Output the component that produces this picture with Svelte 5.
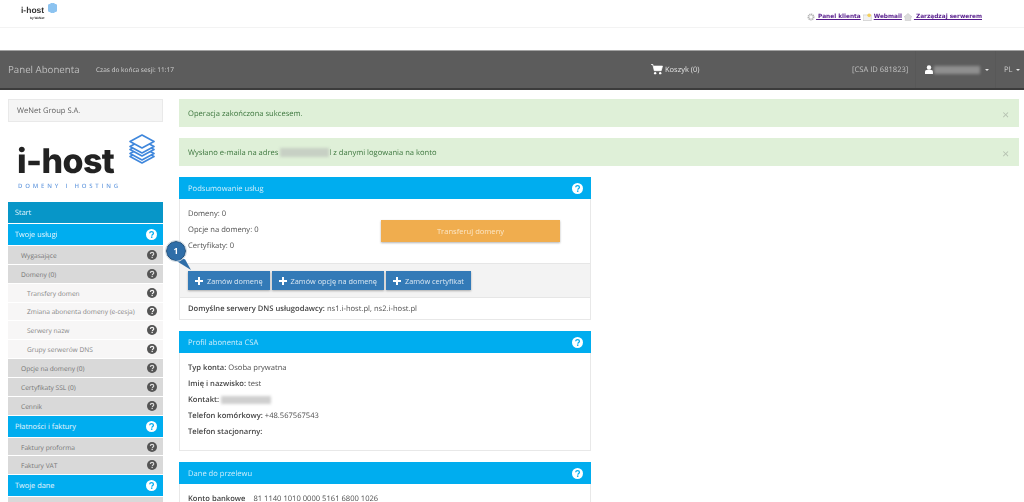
<script>
	const menu = [
		{ label: 'Start', kind: 'start' },
		{ label: 'Twoje usługi', kind: 'head' },
		{ label: 'Wygasające', kind: 'sub' },
		{ label: 'Domeny (0)', kind: 'sub' },
		{ label: 'Transfery domen', kind: 'leaf' },
		{ label: 'Zmiana abonenta domeny (e-cesja)', kind: 'leaf' },
		{ label: 'Serwery nazw', kind: 'leaf' },
		{ label: 'Grupy serwerów DNS', kind: 'leaf' },
		{ label: 'Opcje na domeny (0)', kind: 'sub' },
		{ label: 'Certyfikaty SSL (0)', kind: 'sub' },
		{ label: 'Cennik', kind: 'sub' },
		{ label: 'Płatności i faktury', kind: 'head' },
		{ label: 'Faktury proforma', kind: 'sub' },
		{ label: 'Faktury VAT', kind: 'sub' },
		{ label: 'Twoje dane', kind: 'head' },
		{ label: '', kind: 'sub' }
	];
	const orders = ['Zamów domenę', 'Zamów opcję na domenę', 'Zamów certyfikat'];
</script>

{#snippet help(size)}
	<svg class="help" width={size} height={size} viewBox="0 0 24 24" aria-hidden="true">
		<circle cx="12" cy="12" r="12" fill="currentColor" />
		<path d="M8 9.4c.2-2.4 1.900-3.600 4.100-3.600 2.300 0 4.100 1.300 4.100 3.400 0 3-3.300 2.900-3.300 5.300" fill="none" stroke="var(--hole)" stroke-width="2.800" />
		<rect x="10.800" y="16.200" width="3.200" height="3.200" fill="var(--hole)" />
	</svg>
{/snippet}

<div class="page">
	<header class="topbar">
		<div class="mini-logo">
			<span class="mini-name">i-host</span>
			<span class="mini-by">by WeNet</span>
			<svg class="mini-mark" width="9" height="10" viewBox="0 0 9 10" aria-hidden="true">
				<path d="M4.500 0 9 2.200v5.600L4.500 10 0 7.800V2.200z" fill="#8cc3f0" stroke="#8cc3f0" stroke-linejoin="round" />
			</svg>
		</div>
		<nav class="toplinks">
			<svg width="8" height="8" viewBox="0 0 10 10" aria-hidden="true"><circle cx="5" cy="5" r="3.200" fill="none" stroke="#b5b5b5" stroke-width="2.400" stroke-dasharray="1.500 .6" /></svg>
			<a href="#panel">&nbsp;Panel klienta</a>
			<svg class="mail" width="9" height="8" viewBox="0 0 11 9" aria-hidden="true"><rect y="2" width="10" height="7" fill="#f1f1f1" stroke="#c9c9c9" stroke-width=".8" /><circle cx="7.500" cy="2.500" r="2.200" fill="#f4cf5a" /></svg>
			<a href="#mail">Webmail</a>
			<svg width="8" height="8" viewBox="0 0 10 10" aria-hidden="true"><path d="M5 .5 10 5H8.500v4.500h-7V5H0z" fill="#dcdcdc" stroke="#bdbdbd" stroke-width=".6" /></svg>
			<a href="#server">&nbsp;Zarządzaj serwerem</a>
		</nav>
	</header>

	<div class="navbar">
		<div class="brand">Panel Abonenta</div>
		<div class="session">Czas do końca sesji: 11:17</div>
		<div class="cart">
			<svg width="12" height="11" viewBox="0 0 13 12" aria-hidden="true">
				<path d="M0 .5h2l1.500 6.800h7.600l1.400-5H3.200" fill="#fff" stroke="#fff" stroke-width=".8" />
				<circle cx="4.500" cy="10" r="1.300" fill="#fff" />
				<circle cx="10" cy="10" r="1.300" fill="#fff" />
			</svg>
			<span>Koszyk (0)</span>
		</div>
		<div class="csa">[CSA ID 681823]</div>
		<div class="user">
			<svg width="8" height="9" viewBox="0 0 9 10" aria-hidden="true">
				<circle cx="4.500" cy="2.700" r="2.500" fill="#fff" />
				<path d="M0 10V7.500C0 6 1.500 5.400 3 5.300h3c1.500.1 3 .7 3 2.200V10z" fill="#fff" />
			</svg>
			<span class="user-name"></span>
			<span class="caret"></span>
		</div>
		<div class="lang">PL <span class="caret"></span></div>
	</div>

	<div class="layout">
		<aside class="sidebar">
			<div class="company">WeNet Group S.A.</div>
			<div class="logo">
				<div class="logo-row">
					<span class="logo-name">i-host</span>
					<svg class="logo-mark" width="26" height="30" viewBox="0 0 26 30" aria-hidden="true">
						<g fill="#fff" stroke="#3f87dc" stroke-width="1.600" stroke-linejoin="round">
							<path d="M13 12 25 18.500 13 25 1 18.500z" transform="translate(0 4)" />
							<path d="M13 12 25 18.500 13 25 1 18.500z" transform="translate(0 1)" />
							<path d="M13 9 25 15.500 13 22 1 15.500z" />
							<path d="M13 6 25 12.500 13 19 1 12.500z" />
							<path d="M13 1 25 7.500 13 14 1 7.500z" />
						</g>
					</svg>
				</div>
				<div class="logo-tag">DOMENY I HOSTING</div>
			</div>
			<ul class="menu">
				{#each menu as item}
					<li class={item.kind}>
						<span>{item.label}</span>
						{#if item.kind !== 'start' && item.label}
							{@render help(item.kind === 'head' ? 11 : 10)}
						{/if}
					</li>
				{/each}
			</ul>
		</aside>

		<main class="content">
			<div class="alert">Operacja zakończona sukcesem.<span class="close">×</span></div>
			<div class="alert">
				<span>Wysłano e-maila na adres <span class="redacted mail-blur"></span>l z danymi logowania na konto</span>
				<span class="close">×</span>
			</div>

			<section class="panel">
				<h2><span>Podsumowanie usług</span> {@render help(11)}</h2>
				<div class="summary">
					<div class="counts">
						<p>Domeny: 0</p>
						<p>Opcje na domeny: 0</p>
						<p>Certyfikaty: 0</p>
					</div>
					<button class="transfer">Transferuj domeny</button>
				</div>
				<div class="actions">
					<div class="tip">1</div>
					{#each orders as order}
						<button class="order">
							<svg width="8" height="8" viewBox="0 0 8 8" aria-hidden="true"><path d="M3 0h2v3h3v2H5v3H3V5H0V3h3z" fill="#fff" /></svg>
							{order}
						</button>
					{/each}
				</div>
				<div class="dns"><b>Domyślne serwery DNS usługodawcy:</b> ns1.i-host.pl, ns2.i-host.pl</div>
			</section>

			<section class="panel">
				<h2><span>Profil abonenta CSA</span> {@render help(11)}</h2>
				<div class="profile">
					<p><b>Typ konta:</b> Osoba prywatna</p>
					<p><b>Imię i nazwisko:</b> test</p>
					<p><b>Kontakt:</b> <span class="redacted contact-blur"></span></p>
					<p><b>Telefon komórkowy:</b> +48.567567543</p>
					<p><b>Telefon stacjonarny:</b></p>
				</div>
			</section>

			<section class="panel">
				<h2><span>Dane do przelewu</span> {@render help(11)}</h2>
				<div class="profile">
					<p><b>Konto bankowe</b><span class="account">81 1140 1010 0000 5161 6800 1026</span></p>
				</div>
			</section>
		</main>
	</div>
</div>

<style>
	:global(body) {
		margin: 0;
		background: #fff;
		overflow: hidden;
	}

	.page {
		height: 502px;
		overflow: hidden;
		font-family: 'Open Sans', sans-serif;
		font-size: 7.6px;
		color: #4f4f4f;
		text-rendering: geometricPrecision;
		filter: blur(0.25px);
	}

	.topbar {
		height: 27px;
		border-bottom: 1px solid #f3f3f3;
		display: flex;
		justify-content: space-between;
		align-items: flex-start;
		padding: 0 41px 0 21px;
	}

	.mini-logo {
		position: relative;
		width: 36px;
		padding-top: 6px;
		line-height: 1;
	}

	.mini-name {
		display: block;
		font-family: 'Liberation Sans', sans-serif;
		font-weight: 700;
		font-size: 8.5px;
		color: #333;
	}

	.mini-by {
		display: block;
		font-size: 3px;
		font-weight: 700;
		margin: 2px 0 0 9px;
		color: #333;
	}

	.mini-mark {
		position: absolute;
		left: 27px;
		top: 3px;
	}

	.toplinks {
		display: flex;
		align-items: center;
		gap: 1.500px;
		margin-top: 12px;
		font-family: 'DejaVu Sans', sans-serif;
		font-size: 5.800px;
		font-weight: 700;
		line-height: 10px;
	}

	.toplinks a {
		color: #551a8b;
		margin-right: 1px;
	}

	.navbar {
		margin-top: 22px;
		height: 37px;
		background: #5c5c5c;
		border-top: 1px solid #a3a3a3;
		border-bottom: 2px solid #3c3c3c;
		display: flex;
		align-items: stretch;
		padding-left: 8px;
		color: #cfcfcf;
		line-height: 38px;
	}

	.brand {
		font-size: 9.700px;
		width: 88px;
		color: #bdbdbd;
	}

	.session {
		font-size: 6.500px;
		width: 555px;
		color: #d4d4d4;
	}

	.cart {
		display: flex;
		align-items: center;
		gap: 2px;
		width: 201px;
		font-size: 7.500px;
		color: #e2e2e2;
	}

	.csa {
		width: 63px;
		color: #c2c2c2;
	}

	.user {
		display: flex;
		align-items: center;
		width: 80px;
		padding-left: 9px;
		box-sizing: border-box;
		border-left: 1px solid #585858;
	}

	.user-name {
		width: 46px;
		height: 8px;
		margin: 0 5px 0 1px;
		background: #8f8f8f;
		filter: blur(1.500px);
	}

	.lang {
		color: #c9c9c9;
		padding-left: 8px;
		display: flex;
		align-items: center;
		gap: 3px;
		border-left: 1px solid #585858;
	}

	.caret {
		width: 0;
		height: 0;
		border: 2.500px solid transparent;
		border-top-color: #e6e6e6;
		border-bottom: 0;
		display: inline-block;
	}

	.layout {
		display: grid;
		grid-template-columns: 155px 840px;
		gap: 16px;
		padding: 9px 0 0 8px;
	}

	.company {
		height: 21px;
		line-height: 22px;
		padding-left: 8px;
		background: #f5f5f5;
		border: 1px solid #e9e9e9;
		width: 145px;
		color: #5f5f5f;
	}

	.logo {
		height: 77px;
		padding: 10px 0 0 9px;
		box-sizing: border-box;
	}

	.logo-row {
		position: relative;
		height: 42px;
	}

	.logo-name {
		font-family: 'Inter', sans-serif;
		font-weight: 800;
		font-size: 34px;
		line-height: 42px;
		letter-spacing: -0.6px;
		color: #222;
		position: absolute;
		top: 9px;
		left: 0;
	}

	.logo-mark {
		position: absolute;
		left: 112px;
		top: 2px;
	}

	.logo-tag {
		font-size: 6px;
		font-weight: 600;
		letter-spacing: 2.800px;
		color: #6d9fe0;
		margin: 8px 0 0 1px;
		white-space: nowrap;
	}

	.menu {
		list-style: none;
		margin: 3px 0 0;
		padding: 0;
		display: flex;
		flex-direction: column;
		gap: 1px;
		font-size: 6.600px;
	}

	.menu li {
		display: flex;
		justify-content: space-between;
		align-items: center;
		height: 17.850px;
		box-sizing: border-box;
		padding-right: 6px;
		--hole: #dcdcdc;
		color: #747474;
		white-space: nowrap;
	}

	.menu li span {
		padding-top: 1px;
	}

	.help {
		flex: none;
		display: block;
		color: #545454;
	}

	.menu .start,
	.menu .head {
		height: 21px;
		padding-left: 7px;
		color: #e8f6fd;
		font-size: 7.400px;
	}

	.menu .start {
		background: #0796c8;
	}

	.menu .head {
		background: #00adef;
		--hole: #00adef;
	}

	.menu .head .help {
		color: #fff;
	}

	.menu .sub {
		background: #d9d9d9;
		padding-left: 13px;
	}

	.menu .leaf {
		background: #f7f6f6;
		padding-left: 19px;
		--hole: #f7f6f6;
		color: #858585;
	}

	.alert {
		height: 28px;
		margin-bottom: 11px;
		padding: 2px 10px 0 9px;
		box-sizing: border-box;
		display: flex;
		justify-content: space-between;
		align-items: center;
		background: #dff0d8;
		color: #3c763d;
	}

	.close {
		color: #b5c0b0;
		font-size: 12px;
	}

	.redacted {
		display: inline-block;
		vertical-align: middle;
		background: #c7d0c4;
		filter: blur(1.500px);
	}

	.mail-blur {
		width: 49px;
		height: 9px;
	}

	.contact-blur {
		width: 50px;
		height: 8px;
		background: #cfcfcf;
	}

	.panel {
		width: 412px;
		box-sizing: border-box;
		border: 1px solid #e8e8e8;
		border-top: 0;
		margin-bottom: 11px;
		background: #fff;
	}

	.panel h2 {
		margin: 0 -1px;
		height: 22px;
		padding: 0 8px 0 9px;
		display: flex;
		justify-content: space-between;
		align-items: center;
		background: #00adef;
		color: #cfeefb;
		font-size: 7.600px;
		font-weight: 400;
		--hole: #00adef;
	}

	.panel h2 span {
		padding-top: 1px;
	}

	.panel h2 .help {
		color: #fff;
	}

	.summary {
		height: 64px;
		display: flex;
		padding: 7px 30px 0 8px;
		box-sizing: border-box;
	}

	.counts {
		width: 193px;
	}

	.counts p,
	.profile p {
		margin: 0;
		height: 16px;
		line-height: 16px;
	}

	.transfer {
		width: 179px;
		height: 22px;
		margin-top: 14px;
		border: 0;
		background: #f0ad4e;
		color: #fbe6c6;
		font: inherit;
		box-shadow: 0 1px 2px rgba(0, 0, 0, 0.3);
	}

	.actions {
		position: relative;
		height: 35px;
		padding: 7px 0 0 8px;
		box-sizing: border-box;
		background: #f3f3f3;
		border-top: 1px solid #e6e6e6;
		border-bottom: 1px solid #e6e6e6;
		display: flex;
		gap: 2px;
		align-items: flex-start;
	}

	.order {
		height: 19px;
		padding: 0 7px;
		border: 0;
		display: flex;
		align-items: center;
		gap: 4px;
		background: #337ab7;
		color: #dbe8f3;
		font: inherit;
		font-size: 7.350px;
		box-shadow: 0 1px 2px rgba(0, 0, 0, 0.3);
	}

	.tip {
		position: absolute;
		left: -14px;
		top: -23px;
		width: 18px;
		height: 18px;
		border: 1px solid #234f77;
		outline: 1px solid #cfd8e0;
		border-radius: 50%;
		background: #2f6ea8;
		color: #fff;
		font-size: 8.500px;
		font-weight: 700;
		display: flex;
		align-items: center;
		justify-content: center;
		z-index: 1;
	}

	.tip::after {
		content: '';
		position: absolute;
		left: 4px;
		top: 10px;
		width: 20px;
		height: 18px;
		background: #2f6ea8;
		clip-path: polygon(0 30%, 70% 40%, 100% 100%);
		z-index: -1;
	}

	.dns {
		height: 21px;
		line-height: 23px;
		padding-left: 8px;
	}

	b {
		font-weight: 600;
		color: #444;
	}

	.account {
		margin-left: 8px;
	}

	.profile {
		height: 97px;
		padding: 7px 8px 0;
		box-sizing: border-box;
	}
</style>
